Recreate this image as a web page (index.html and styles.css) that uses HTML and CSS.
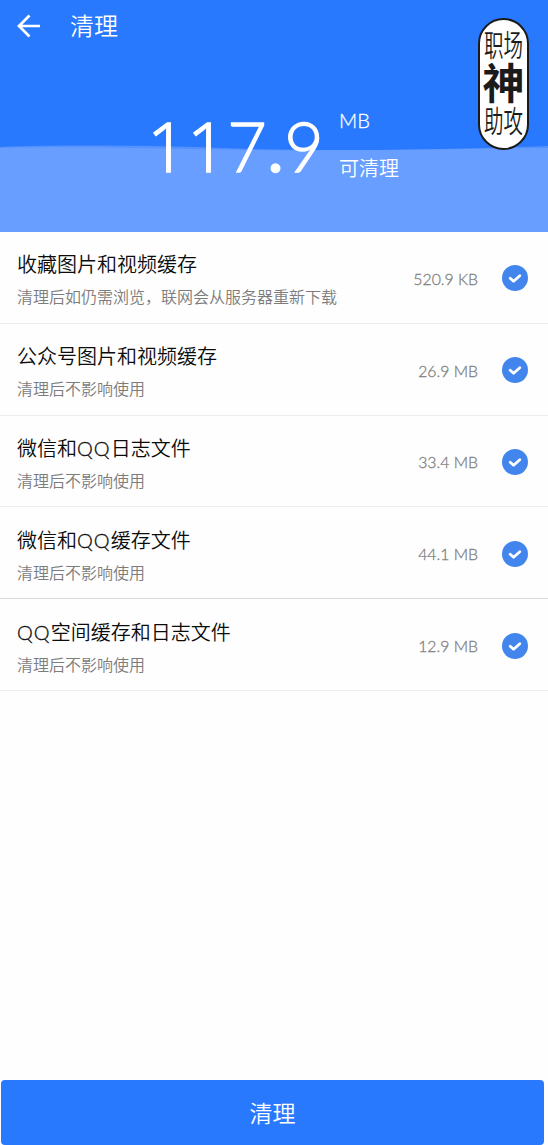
FILE: index.html
```html
<!DOCTYPE html>
<html lang="zh-CN">
<head>
<meta charset="utf-8">
<title>清理</title>
<link rel="stylesheet" href="styles.css">
</head>
<body>
<main class="screen">
  <header class="hero">
    <svg class="wave" viewBox="0 0 548 88" preserveAspectRatio="none"><path class="wave-back" d="M0 3C60 1 140 1 220 4S400 7 548 2V88H0Z"/><path class="wave-front" d="M0 4C90 2 160 5 250 6S440 5 548 4V88H0Z"/></svg>
    <nav class="bar">
      <svg class="back" viewBox="0 0 24 24"><path d="M12.5 1.5 2 12 12.5 22.5M2.5 12H23"/></svg>
      <h1 class="bar-title">清理</h1>
    </nav>
    <div class="total">
      <div class="number"><span class="one">1</span><span class="one">1</span><span class="digit">7</span><span class="dot">.</span><span class="digit">9</span></div>
      <div class="unit"><span class="mb">MB</span><span class="can">可清理</span></div>
    </div>
    <div class="badge"><span class="thin">职场</span><span class="heavy">神</span><span class="thin">助攻</span></div>
  </header>
  <ul class="list">
    <li class="row"><div class="info"><h2 class="name">收藏图片和视频缓存</h2><p class="note">清理后如仍需浏览，联网会从服务器重新下载</p></div><span class="size">520.9 KB</span><svg class="check" viewBox="0 0 26 26"><circle cx="13" cy="13" r="13"/><path d="m8.2 13.2 3.4 3.1 6.2-5.6"/></svg></li>
    <li class="row"><div class="info"><h2 class="name">公众号图片和视频缓存</h2><p class="note">清理后不影响使用</p></div><span class="size">26.9 MB</span><svg class="check" viewBox="0 0 26 26"><circle cx="13" cy="13" r="13"/><path d="m8.2 13.2 3.4 3.1 6.2-5.6"/></svg></li>
    <li class="row"><div class="info"><h2 class="name">微信和<span class="qq">QQ</span>日志文件</h2><p class="note">清理后不影响使用</p></div><span class="size">33.4 MB</span><svg class="check" viewBox="0 0 26 26"><circle cx="13" cy="13" r="13"/><path d="m8.2 13.2 3.4 3.1 6.2-5.6"/></svg></li>
    <li class="row row-strong"><div class="info"><h2 class="name">微信和<span class="qq">QQ</span>缓存文件</h2><p class="note">清理后不影响使用</p></div><span class="size">44.1 MB</span><svg class="check" viewBox="0 0 26 26"><circle cx="13" cy="13" r="13"/><path d="m8.2 13.2 3.4 3.1 6.2-5.6"/></svg></li>
    <li class="row"><div class="info"><h2 class="name"><span class="qq">QQ</span>空间缓存和日志文件</h2><p class="note">清理后不影响使用</p></div><span class="size">12.9 MB</span><svg class="check" viewBox="0 0 26 26"><circle cx="13" cy="13" r="13"/><path d="m8.2 13.2 3.4 3.1 6.2-5.6"/></svg></li>
  </ul>
  <button class="clean">清理</button>
</main>
</body>
</html>
```
FILE: styles.css
```css
* { box-sizing: border-box; margin: 0; padding: 0; }
body { background: #fefefe; font-family: Lato, "Noto Sans CJK SC", sans-serif; }
.screen { height: 1145px; display: flex; flex-direction: column; overflow: hidden; }
.hero { position: relative; height: 232px; flex: none; background: #2979ff; color: #fff; }
.wave { position: absolute; left: 0; bottom: 0; width: 100%; height: 88px; }
.wave-back { fill: #5592ff; }
.wave-front { fill: #679eff; }
.bar { position: relative; height: 52px; display: flex; align-items: center; padding-left: 17px; }
.back { width: 24px; height: 24px; fill: none; stroke: #fff; stroke-width: 2.7; }
.bar-title { margin-left: 29px; font-size: 24px; font-weight: 350; line-height: 54px; }
.total { position: relative; height: 100px; margin-top: 47px; padding-left: 147px; display: flex; }
.number { display: flex; height: 96px; line-height: 94px; font-size: 68px; font-weight: 300; -webkit-text-stroke: 1.3px #fff; }
.one, .digit { width: 40px; text-align: center; }
.one { font-family: "Open Sans", sans-serif; line-height: 93px; -webkit-text-stroke: 1.6px #fff; }
.dot { width: 17px; text-align: center; font-weight: 400; }
.unit { display: flex; flex-direction: column; margin-left: 15px; padding-top: 7px; font-size: 20px; font-weight: 350; }
.mb { line-height: 28px; font-weight: 300; -webkit-text-stroke: .3px #fff; }
.can { line-height: 30px; margin-top: 19px; }
.badge { position: absolute; left: 478px; top: 18px; width: 51px; height: 132px; border: 2px solid #1b1b1b; border-radius: 26px; background: #fff; color: #1b1b1b; display: flex; flex-direction: column; align-items: center; padding-top: 15px; }
.thin { font-size: 19.5px; line-height: 20px; height: 20px; font-weight: 350; white-space: nowrap; transform: scaleY(1.5); }
.heavy { font-size: 42px; line-height: 42px; height: 43px; margin: 7px 0 6px; font-weight: 600; }
.list { list-style: none; }
.row { height: 91.8px; display: flex; align-items: center; padding: 2px 20px 0 17px; border-bottom: 1px solid #ededed; }
.row-strong { border-bottom-color: #d8d8d8; }
.info { flex: 1; padding-top: 4px; }
.name { font-size: 20px; line-height: 34px; font-weight: 350; color: #0c0c0c; }
.note { font-size: 16px; line-height: 32px; font-weight: 350; color: #7c7c7c; }
.qq { font-weight: 300; letter-spacing: 1px; -webkit-text-stroke: .3px #151515; }
.size { font-size: 15.8px; font-weight: 300; color: #808080; -webkit-text-stroke: .3px #808080; }
.check { width: 26px; height: 26px; margin-left: 24px; fill: #4285ed; }
.check path { fill: none; stroke: #fff; stroke-width: 2.8; stroke-linecap: round; stroke-linejoin: round; }
.clean { margin: auto 4px 0 1px; height: 65px; flex: none; border: 0; border-radius: 4px; background: #2979ff; color: #fff; font: 350 23px/65px "Noto Sans CJK SC", sans-serif; }
```
